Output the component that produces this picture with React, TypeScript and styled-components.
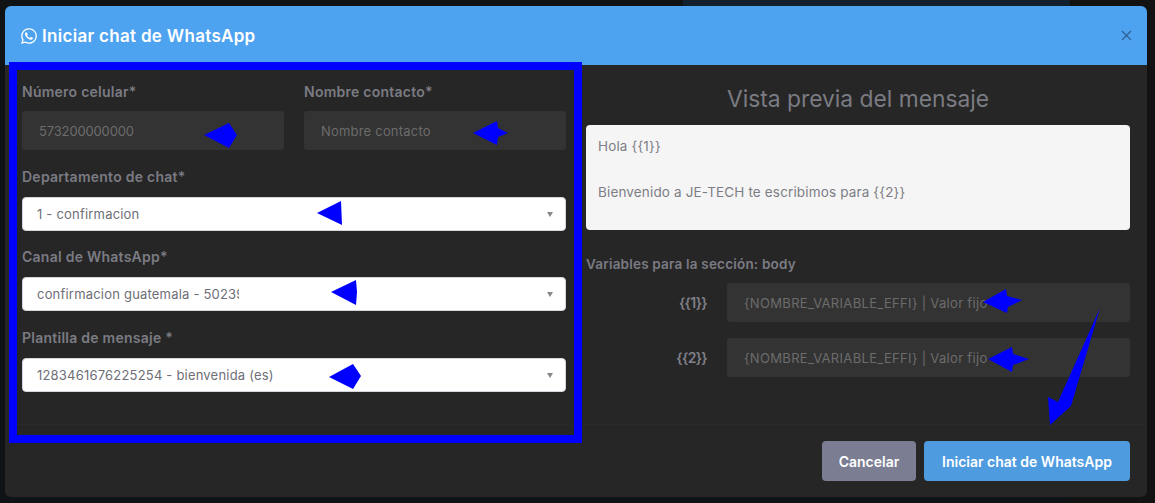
import React from "react";
import styled, { createGlobalStyle } from "styled-components";
import { FaWhatsapp } from "react-icons/fa";

const GlobalStyle = createGlobalStyle`
  html, body {
    margin: 0;
    height: 100%;
    background: #0f1316;
    overflow: hidden;
  }
  * {
    box-sizing: border-box;
  }
`;

const Page = styled.div`
  position: relative;
  width: 1155px;
  height: 503px;
  padding: 6px 8px 6px 5px;
  font-family: Inter, "Liberation Sans", sans-serif;
  background:
    linear-gradient(#12202d, #12202d) 683px 0 / 387px 6px no-repeat,
    linear-gradient(#121212, #121212) 1070px 0 / 85px 503px no-repeat,
    #0f1316;
`;

const Modal = styled.div`
  width: 1142px;
  height: 491px;
  background: #262626;
  border-radius: 6px;
  overflow: hidden;
  display: flex;
  flex-direction: column;
`;

const Header = styled.div`
  height: 59px;
  flex: none;
  background: #4ea3f0;
  display: flex;
  align-items: center;
  justify-content: space-between;
  padding: 0 15px;
`;

const HeaderTitle = styled.h5`
  margin: 0;
  display: flex;
  align-items: center;
  gap: 4px;
  color: #ffffff;
  font-size: 17px;
  font-weight: 600;
  letter-spacing: 0.3px;
`;

const Body = styled.div`
  height: 360px;
  flex: none;
  padding: 0 17px;
  display: grid;
  grid-template-columns: 544px 544px;
  gap: 20px;
  border-bottom: 1px solid #282a2c;
`;

const FormColumn = styled.div`
  padding-top: 18px;
  display: flex;
  flex-direction: column;
`;

const TopRow = styled.div`
  display: grid;
  grid-template-columns: 262px 262px;
  gap: 20px;
`;

const Field = styled.div<{ $top?: number }>`
  display: flex;
  flex-direction: column;
  margin-top: ${(p) => p.$top ?? 0}px;
`;

const Label = styled.label`
  height: 18px;
  line-height: 18px;
  margin-bottom: 10px;
  color: #7b7b83;
  font-size: 14px;
  font-weight: 600;
  letter-spacing: 0.25px;
`;

const DarkInput = styled.input`
  height: 39px;
  width: 100%;
  border: none;
  outline: none;
  border-radius: 3px;
  background: #333333;
  padding: 0 17px;
  font-family: inherit;
  font-size: 13px;
  letter-spacing: 0.2px;
  &::placeholder {
    color: #6c6c6c;
    opacity: 1;
  }
`;

const PhoneInput = styled(DarkInput)`
  letter-spacing: -0.15px;
`;

const VariableInput = styled(DarkInput)`
  letter-spacing: 0.32px;
`;

const SelectBox = styled.div`
  height: 34px;
  margin-top: 1px;
  background: #ffffff;
  border: 1px solid #d5d5de;
  border-radius: 4px;
  display: flex;
  align-items: center;
  justify-content: space-between;
  padding: 0 12px 0 14px;
  color: #6e6e76;
  font-size: 13px;
  letter-spacing: 0.2px;
`;

const SelectText = styled.span<{ $clip?: number }>`
  white-space: nowrap;
  overflow: hidden;
  max-width: ${(p) => (p.$clip ? `${p.$clip}px` : "none")};
`;

const Caret = styled.span`
  width: 0;
  height: 0;
  border-left: 3.5px solid transparent;
  border-right: 3.5px solid transparent;
  border-top: 5px solid #888888;
`;

const PreviewColumn = styled.div`
  display: flex;
  flex-direction: column;
`;

const PreviewTitle = styled.h3`
  margin: 0;
  padding-top: 18px;
  height: 60px;
  line-height: 32px;
  text-align: center;
  color: #7b7b83;
  font-size: 22.8px;
  font-weight: 400;
`;

const PreviewBox = styled.div`
  height: 105px;
  background: #f5f5f5;
  border-radius: 4px;
  padding: 10px 12px;
  color: #7d7d85;
  font-size: 13.5px;
  line-height: 23px;
  letter-spacing: 0.15px;
  white-space: pre-line;
`;

const SectionLabel = styled.div`
  margin-top: 25px;
  height: 18px;
  line-height: 18px;
  color: #7b7b83;
  font-size: 13.5px;
  font-weight: 600;
  letter-spacing: 0.2px;
`;

const VariableRow = styled.div<{ $top: number }>`
  margin-top: ${(p) => p.$top}px;
  display: grid;
  grid-template-columns: 121px 403px;
  gap: 20px;
  align-items: center;
`;

const VariableName = styled.span`
  text-align: right;
  color: #808088;
  font-size: 14px;
  font-weight: 600;
  letter-spacing: -0.7px;
`;

const Footer = styled.div`
  flex: 1;
  display: flex;
  justify-content: flex-end;
  gap: 8px;
  padding: 16px 17px 0 0;
`;

const Button = styled.button<{ $primary?: boolean }>`
  height: 40px;
  width: ${(p) => (p.$primary ? 206 : 94)}px;
  border: none;
  border-radius: 4px;
  background: ${(p) => (p.$primary ? "#4e9bdf" : "#7b7d92")};
  color: #ffffff;
  font-family: inherit;
  font-size: 14px;
  font-weight: 600;
`;

const CloseIcon = styled.svg`
  width: 11px;
  height: 11px;
  stroke: #2f5f8f;
  stroke-width: 1.2;
  fill: none;
`;

const MarkerFrame = styled.div`
  position: absolute;
  left: 9px;
  top: 62px;
  width: 573px;
  height: 381px;
  border: 8px solid #0000ff;
  pointer-events: none;
`;

const Arrows = styled.svg`
  position: absolute;
  inset: 0;
  width: 1155px;
  height: 503px;
  fill: #0000ff;
  pointer-events: none;
`;

const arrowPoints = [
  "204,135 229,123 237,135 229,148",
  "473,133 497,121 498,128 508,133 498,137 497,145",
  "317,213 341,201 342,225",
  "331,292 356,280 357,292 356,305",
  "329,377 353,364 361,376 353,389",
  "983,302 1006,289 1007,296 1022,300 1008,307 1007,313",
  "988,359 1012,347 1013,354 1029,359 1013,365 1012,372",
  "1100,308 1071,406 1050,425 1048,397 1058,402",
];

export default function App() {
  return (
    <Page>
      <GlobalStyle />
      <Modal>
        <Header>
          <HeaderTitle>
            <FaWhatsapp size={18} />
            Iniciar chat de WhatsApp
          </HeaderTitle>
          <CloseIcon viewBox="0 0 11 11">
            <path d="M1 1l9 9M10 1l-9 9" />
          </CloseIcon>
        </Header>
        <Body>
          <FormColumn>
            <TopRow>
              <Field>
                <Label>Número celular*</Label>
                <PhoneInput placeholder="573200000000" />
              </Field>
              <Field>
                <Label>Nombre contacto*</Label>
                <DarkInput placeholder="Nombre contacto" />
              </Field>
            </TopRow>
            <Field $top={18}>
              <Label>Departamento de chat*</Label>
              <SelectBox>
                <SelectText>1 - confirmacion</SelectText>
                <Caret />
              </SelectBox>
            </Field>
            <Field $top={17}>
              <Label>Canal de WhatsApp*</Label>
              <SelectBox>
                <SelectText $clip={202}>confirmacion guatemala - 50239000000</SelectText>
                <Caret />
              </SelectBox>
            </Field>
            <Field $top={18}>
              <Label>Plantilla de mensaje *</Label>
              <SelectBox>
                <SelectText>1283461676225254 - bienvenida (es)</SelectText>
                <Caret />
              </SelectBox>
            </Field>
          </FormColumn>
          <PreviewColumn>
            <PreviewTitle>Vista previa del mensaje</PreviewTitle>
            <PreviewBox>
              {"Hola {{1}}\n\nBienvenido a JE-TECH te escribimos para {{2}}"}
            </PreviewBox>
            <SectionLabel>Variables para la sección: body</SectionLabel>
            <VariableRow $top={10}>
              <VariableName>{"{{1}}"}</VariableName>
              <VariableInput placeholder="{NOMBRE_VARIABLE_EFFI} | Valor fijo" />
            </VariableRow>
            <VariableRow $top={16}>
              <VariableName>{"{{2}}"}</VariableName>
              <VariableInput placeholder="{NOMBRE_VARIABLE_EFFI} | Valor fijo" />
            </VariableRow>
          </PreviewColumn>
        </Body>
        <Footer>
          <Button>Cancelar</Button>
          <Button $primary>Iniciar chat de WhatsApp</Button>
        </Footer>
      </Modal>
      <MarkerFrame />
      <Arrows viewBox="0 0 1155 503">
        {arrowPoints.map((points) => (
          <polygon key={points} points={points} />
        ))}
      </Arrows>
    </Page>
  );
}
